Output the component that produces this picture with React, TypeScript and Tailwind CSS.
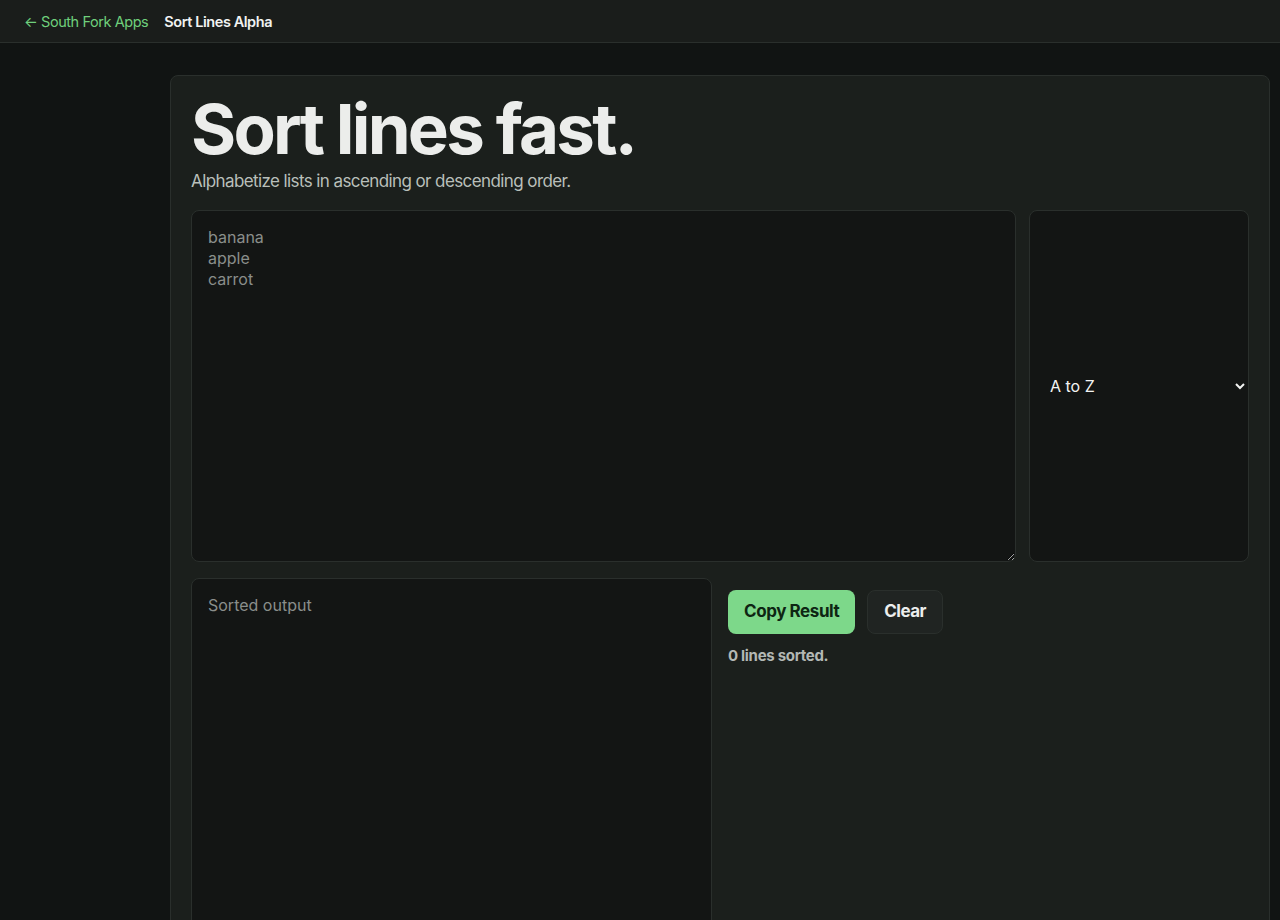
import React, { useState } from 'react';

export default function App() {
  const [input, setInput] = useState('');
  const [order, setOrder] = useState('asc');

  const lines = input.split('\n').filter((l) => l.trim() !== '');
  const sorted = [...lines].sort((a, b) => (order === 'asc' ? a.localeCompare(b) : b.localeCompare(a)));

  return (
    <div className="min-h-screen bg-[#111413] font-['Inter',sans-serif] text-[#ecefed]">
      {/* Top bar */}
      <header className="flex h-[43px] items-center gap-4 border-b border-[#2a2f2c] bg-[#1a1d1b] px-6 pt-px">
        <a href="#" className="text-[14.5px] tracking-[-0.03em] text-[#6fd07c]">
          ← South Fork Apps
        </a>
        <span className="text-[14.5px] font-semibold tracking-[-0.03em] text-[#f1f3f2]">Sort Lines Alpha</span>
      </header>

      <main className="pl-[170px] pr-[10px] pt-8">
        <section className="rounded-lg border border-[#2a2f2c] bg-[#1b1f1c] px-5 pt-[18px] pb-0">
          <h1 className="text-[69px] font-bold leading-[70px] tracking-[-0.04em] text-[#ecedeb]">
            Sort lines fast.
          </h1>
          <p className="mt-[6px] text-[17px] leading-[22px] tracking-[-0.035em] text-[#b9bfba]">
            Alphabetize lists in ascending or descending order.
          </p>

          <div className="mt-[18px] grid grid-cols-[1fr_220px] gap-[13px]">
            <textarea
              value={input}
              onChange={(e) => setInput(e.target.value)}
              placeholder={'banana\napple\ncarrot'}
              className="h-[352px] rounded-lg border border-[#2a2f2c] bg-[#131514] px-4 py-4 text-[16px] leading-[21px] text-[#e6e8e7] placeholder:text-[#8a8e8b] outline-none"
            />
            <select
              value={order}
              onChange={(e) => setOrder(e.target.value)}
              className="h-[352px] rounded-lg border border-[#2a2f2c] bg-[#131514] pl-4 text-[16px] text-[#f2f3f2] outline-none [color-scheme:dark]"
            >
              <option value="asc">A to Z</option>
              <option value="desc">Z to A</option>
            </select>
          </div>

          <div className="mt-[16px] grid grid-cols-2 gap-[16px]">
            <textarea
              readOnly
              value={sorted.join('\n')}
              placeholder="Sorted output"
              className="h-[360px] rounded-lg border border-[#2a2f2c] bg-[#131514] px-4 py-4 text-[16px] leading-[21px] text-[#e6e8e7] placeholder:text-[#8a8e8b] outline-none"
            />
            <div className="pt-3">
              <div className="flex gap-3">
                <button className="h-[44px] rounded-lg bg-[#7dd88a] px-4 text-[17px] font-bold tracking-[-0.025em] text-[#0e2613]">
                  Copy Result
                </button>
                <button
                  onClick={() => setInput('')}
                  className="h-[44px] rounded-lg border border-[#2a2f2c] bg-[#202422] px-4 text-[17px] font-bold tracking-[-0.03em] text-[#eceeed]"
                >
                  Clear
                </button>
              </div>
              <p className="mt-[11px] text-[15px] font-bold tracking-[-0.02em] text-[#b3b8b4]">
                {sorted.length} lines sorted.
              </p>
            </div>
          </div>
        </section>
      </main>
    </div>
  );
}
